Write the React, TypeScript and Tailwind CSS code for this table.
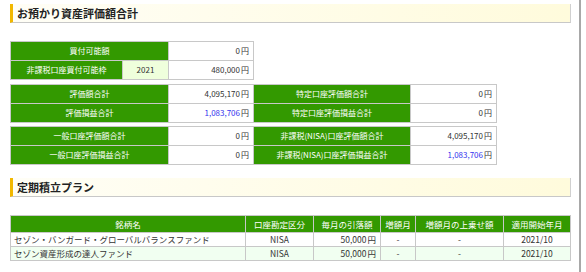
import React from 'react';

const font = { fontFamily: '"Noto Sans CJK JP", "Noto Sans", sans-serif' };

const SectionTitle = ({ title }: { title: string }) => (
  <div className="h-[19px] flex items-center pl-[4px] border-l-[3px] border-l-[#f2b800] border-b border-r border-b-[#c8c8c8] border-r-[#d0d0d0] bg-gradient-to-r from-[#fffef6] to-[#fffbdc]">
    <span className="text-[11px] font-bold text-[#222] leading-none">{title}</span>
  </div>
);

const th = 'bg-[#339900] text-white text-center font-normal border border-[#c8c8c8] px-1';
const td = 'bg-white text-right text-[#333] border border-[#c8c8c8] px-1 whitespace-nowrap';

const Yen = ({ v, blue }: { v: string; blue?: boolean }) => (
  <>
    <span className={blue ? 'text-[#3333ee]' : ''}>{v}</span>
    <span className="ml-[1px]">円</span>
  </>
);

const summaryRows = [
  [
    ['評価額合計', '4,095,170', false],
    ['特定口座評価額合計', '0', false],
  ],
  [
    ['評価損益合計', '1,083,706', true],
    ['特定口座評価損益合計', '0', false],
  ],
];

const accountRows = [
  [
    ['一般口座評価額合計', '0', false],
    ['非課税(NISA)口座評価額合計', '4,095,170', false],
  ],
  [
    ['一般口座評価損益合計', '0', false],
    ['非課税(NISA)口座評価損益合計', '1,083,706', true],
  ],
];

const plans = [
  { name: 'セゾン・バンガード・グローバルバランスファンド', kind: 'NISA', amount: '50,000', start: '2021/10' },
  { name: 'セゾン資産形成の達人ファンド', kind: 'NISA', amount: '50,000', start: '2021/10' },
];

const SummaryTable = ({ rows }: { rows: (string | boolean)[][][] }) => (
  <table className="border-collapse table-fixed w-[486px] text-[8px] leading-none">
    <colgroup>
      <col className="w-[158px]" />
      <col className="w-[85px]" />
      <col className="w-[157px]" />
      <col className="w-[86px]" />
    </colgroup>
    <tbody>
      {rows.map((row, i) => (
        <tr key={i} className="h-[19px]">
          {row.map(([label, value, blue]) => (
            <React.Fragment key={label as string}>
              <th className={th}>{label as string}</th>
              <td className={td}>
                <Yen v={value as string} blue={blue as boolean} />
              </td>
            </React.Fragment>
          ))}
        </tr>
      ))}
    </tbody>
  </table>
);

export default function App() {
  return (
    <div className="w-[581px] min-h-[272px] bg-white border-r-2 border-[#a8a8a8] pl-[10px] pr-[8px] pt-[4px]" style={font}>
      <SectionTitle title="お預かり資産評価額合計" />

      <table className="mt-[18px] border-collapse table-fixed w-[243px] text-[8px] leading-none">
        <colgroup>
          <col className="w-[112px]" />
          <col className="w-[46px]" />
          <col className="w-[85px]" />
        </colgroup>
        <tbody>
          <tr className="h-[19px]">
            <th colSpan={2} className={th}>買付可能額</th>
            <td className={td}>
              <Yen v="0" />
            </td>
          </tr>
          <tr className="h-[19px]">
            <th className={th}>非課税口座買付可能枠</th>
            <td className="bg-[#efffdc] text-center text-[#333] border border-[#c8c8c8]">2021</td>
            <td className={td}>
              <Yen v="480,000" />
            </td>
          </tr>
        </tbody>
      </table>

      <div className="mt-[4px]">
        <SummaryTable rows={summaryRows} />
      </div>
      <div className="mt-[3px]">
        <SummaryTable rows={accountRows} />
      </div>

      <div className="mt-[13px]">
        <SectionTitle title="定期積立プラン" />
      </div>

      <table className="mt-[18px] border-collapse table-fixed w-[560px] text-[8.5px] leading-none">
        <colgroup>
          <col className="w-[235px]" />
          <col className="w-[68px]" />
          <col className="w-[67px]" />
          <col className="w-[35px]" />
          <col className="w-[88px]" />
          <col className="w-[67px]" />
        </colgroup>
        <thead>
          <tr className="h-[17px]">
            <th className={th}>銘柄名</th>
            <th className={th}>口座勘定区分</th>
            <th className={th}>毎月の引落額</th>
            <th className={th}>増額月</th>
            <th className={th}>増額月の上乗せ額</th>
            <th className={th}>適用開始年月</th>
          </tr>
        </thead>
        <tbody>
          {plans.map((p, i) => (
            <tr key={p.name} className={`h-[14px] text-[#333] ${i % 2 ? 'bg-[#f1fff1]' : 'bg-white'}`}>
              <td className="border border-[#c8c8c8] px-[3px] text-left whitespace-nowrap">{p.name}</td>
              <td className="border border-[#c8c8c8] text-center">{p.kind}</td>
              <td className="border border-[#c8c8c8] px-1 text-right">
                <Yen v={p.amount} />
              </td>
              <td className="border border-[#c8c8c8] text-center">-</td>
              <td className="border border-[#c8c8c8] text-center">-</td>
              <td className="border border-[#c8c8c8] text-center">{p.start}</td>
            </tr>
          ))}
        </tbody>
      </table>
    </div>
  );
}
